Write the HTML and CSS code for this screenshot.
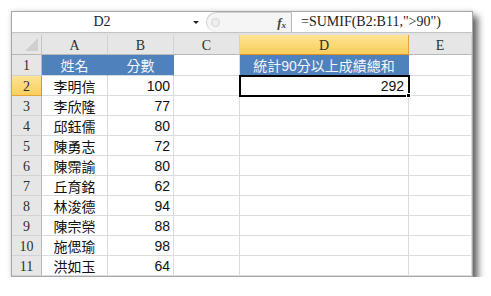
FILE: index.html
```html
<!DOCTYPE html>
<html lang="zh-Hant">
<head>
    <meta charset="UTF-8">
    <meta name="viewport" content="width=device-width, initial-scale=1.0">
    <title>SUMIF 統計</title>
    <link rel="stylesheet" href="styles.css">
</head>
<body>
    <div class="window">
        <div class="formula-bar">
            <div class="name-box">
                <span class="name">D2</span>
                <span class="arrow"></span>
            </div>
            <div class="fx-box">
                <span class="grip"></span>
                <span class="fx"><i>f</i><sub>x</sub></span>
            </div>
            <div class="formula">=SUMIF(B2:B11,"&gt;90")</div>
        </div>
        <div class="band"></div>
        <div class="sheet">
            <!-- 欄標題 -->
            <div class="corner">
                <svg width="13" height="13" viewBox="0 0 13 13"><polygon points="13,0 13,13 0,13" fill="#cfcfcf"/></svg>
            </div>
            <div class="col-hd">A</div>
            <div class="col-hd">B</div>
            <div class="col-hd">C</div>
            <div class="col-hd active">D</div>
            <div class="col-hd">E</div>

            <div class="row-hd">1</div>
            <div class="cell title">姓名</div>
            <div class="cell title">分數</div>
            <div class="cell"></div>
            <div class="cell title">統計90分以上成績總和</div>
            <div class="cell"></div>

            <div class="row-hd active">2</div>
            <div class="cell name">李明信</div>
            <div class="cell num">100</div>
            <div class="cell"></div>
            <div class="cell num selected">292</div>
            <div class="cell"></div>

            <div class="row-hd">3</div>
            <div class="cell name">李欣隆</div>
            <div class="cell num">77</div>
            <div class="cell"></div><div class="cell"></div><div class="cell"></div>

            <div class="row-hd">4</div>
            <div class="cell name">邱鈺儒</div>
            <div class="cell num">80</div>
            <div class="cell"></div><div class="cell"></div><div class="cell"></div>

            <div class="row-hd">5</div>
            <div class="cell name">陳勇志</div>
            <div class="cell num">72</div>
            <div class="cell"></div><div class="cell"></div><div class="cell"></div>

            <div class="row-hd">6</div>
            <div class="cell name">陳霈諭</div>
            <div class="cell num">80</div>
            <div class="cell"></div><div class="cell"></div><div class="cell"></div>

            <div class="row-hd">7</div>
            <div class="cell name">丘育銘</div>
            <div class="cell num">62</div>
            <div class="cell"></div><div class="cell"></div><div class="cell"></div>

            <div class="row-hd">8</div>
            <div class="cell name">林浚德</div>
            <div class="cell num">94</div>
            <div class="cell"></div><div class="cell"></div><div class="cell"></div>

            <div class="row-hd">9</div>
            <div class="cell name">陳宗榮</div>
            <div class="cell num">88</div>
            <div class="cell"></div><div class="cell"></div><div class="cell"></div>

            <div class="row-hd">10</div>
            <div class="cell name">施偲瑜</div>
            <div class="cell num">98</div>
            <div class="cell"></div><div class="cell"></div><div class="cell"></div>

            <div class="row-hd">11</div>
            <div class="cell name">洪如玉</div>
            <div class="cell num">64</div>
            <div class="cell"></div><div class="cell"></div><div class="cell"></div>
        </div>
    </div>
</body>
</html>
```

FILE: styles.css
```css
body {
    margin: 0;
    background-color: #fff;
    font-family: "Liberation Sans", "Noto Sans CJK TC", sans-serif;
}
.window {
    margin: 11px 0 0 11px;
    width: 462px;
    box-sizing: border-box;
    border: 1px solid #a8a8a8;
    background-color: #fff;
    box-shadow: 5px 5px 7px rgba(0, 0, 0, 0.6), 0 0 5px rgba(0, 0, 0, 0.12);
}
.formula-bar {
    display: flex;
    height: 21px;
    box-sizing: border-box;
    border-bottom: 1px solid #c4c4c4;
    font-family: "Liberation Serif", serif;
    font-size: 14px;
    color: #222;
}
.name-box {
    width: 194px;
    display: flex;
    align-items: center;
}
.name-box .name {
    flex: 1;
    text-align: center;
    padding-left: 2px;
}
.name-box .arrow {
    width: 16px;
    display: flex;
    justify-content: center;
}
.name-box .arrow::before {
    content: "";
    border-left: 3px solid transparent;
    border-right: 3px solid transparent;
    border-top: 3px solid #222;
    margin-right: 4px;
}
.fx-box {
    width: 86px;
    box-sizing: border-box;
    display: flex;
    align-items: center;
    justify-content: space-between;
    background-color: #f5f5f5;
    border: 1px solid #cfcfcf;
    border-right-color: #b8b8b8;
    border-bottom: none;
    border-radius: 11px 0 0 11px;
    padding: 0 5px 0 4px;
}
.fx-box .grip {
    width: 7px;
    height: 7px;
    border-radius: 50%;
    border: 1px solid #d4d4d4;
    background-color: #eee;
}
.fx-box .fx {
    font-size: 13px;
    font-weight: bold;
    color: #444;
}
.fx-box .fx sub {
    font-size: 9px;
    font-style: italic;
    vertical-align: -1px;
}
.formula {
    flex: 1;
    display: flex;
    align-items: center;
    padding-left: 9px;
}
.band {
    height: 2px;
    background-color: #e2e2e2;
}
.sheet {
    display: grid;
    grid-template-columns: 30px 66px 66px 66px 169px 1fr;
    grid-template-rows: 20px 21px repeat(10, 20px);
}
.sheet > div {
    box-sizing: border-box;
    display: flex;
    align-items: center;
}
.corner,
.col-hd,
.row-hd {
    background-color: #e6e6e6;
    font-family: "Liberation Serif", serif;
    font-size: 14px;
    color: #2f2f2f;
}
.corner {
    justify-content: flex-end;
    align-items: flex-end !important;
    padding: 0 3px 3px 0;
    border-right: 1px solid #c6c6c6;
    border-bottom: 1px solid #b8b8b8;
}
.col-hd {
    justify-content: center;
    border-right: 1px solid #d2d2d2;
    border-bottom: 1px solid #b8b8b8;
    padding-top: 2px;
}
.col-hd.active {
    background: linear-gradient(#fde393, #f8cf5c);
    border-right-color: #e6a33b;
    border-bottom-color: #e08d2c;
}
.row-hd {
    justify-content: center;
    border-right: 1px solid #b8b8b8;
    border-bottom: 1px solid #d2d2d2;
    padding-top: 2px;
}
.row-hd.active {
    background: linear-gradient(#fde393, #f8cf5c);
    border-right-color: #e08d2c;
    border-bottom-color: #e6a33b;
}
.cell {
    border-right: 1px solid #dadcdd;
    border-bottom: 1px solid #dadcdd;
    font-size: 14px;
    color: #111;
    white-space: nowrap;
    overflow: hidden;
}
.cell.title {
    background-color: #4f81bd;
    color: #f2f5fa;
    justify-content: center;
    border-right-color: #4f81bd;
}
.cell.name {
    justify-content: center;
}
.cell.num {
    justify-content: flex-end;
    padding-right: 3px;
}
.cell.selected {
    position: relative;
    overflow: visible;
    outline: 2px solid #000;
    outline-offset: -1px;
    padding-right: 4px;
}
.cell.selected::after {
    content: "";
    position: absolute;
    right: -3px;
    bottom: -3px;
    width: 5px;
    height: 5px;
    background-color: #000;
    border: 1px solid #fff;
    box-sizing: border-box;
}
```
